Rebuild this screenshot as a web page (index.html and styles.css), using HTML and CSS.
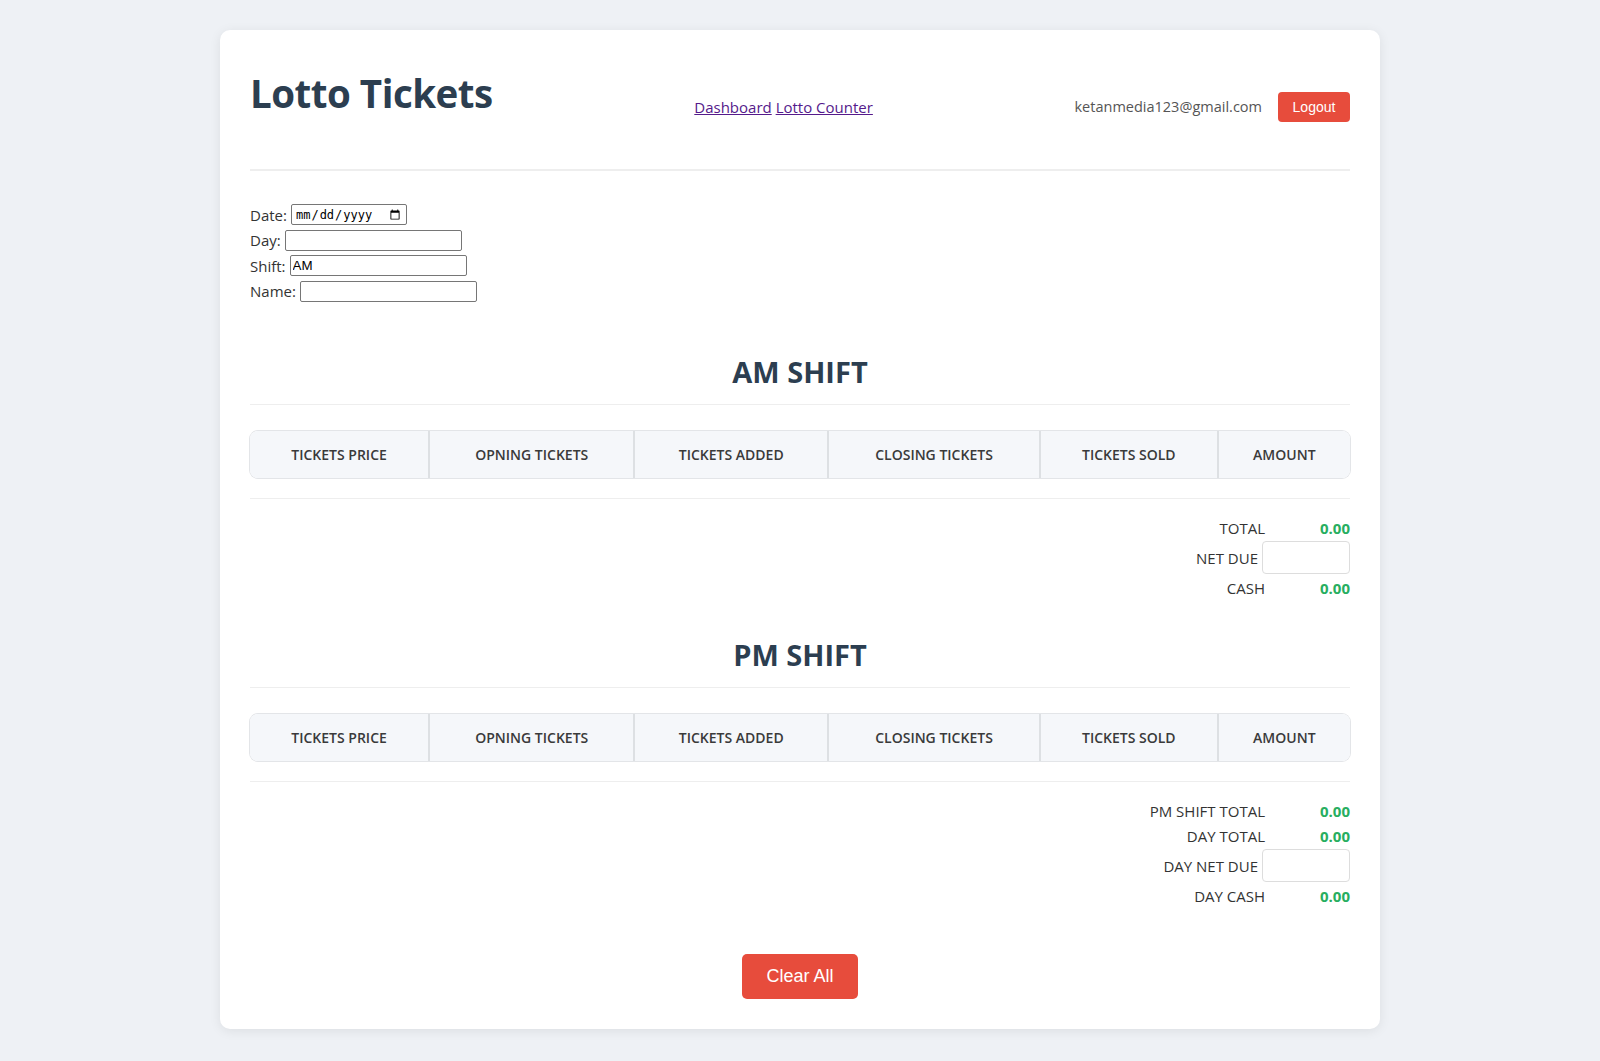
FILE: index.html
```html
<!DOCTYPE html>
<html lang="en">
<head>
<meta charset="utf-8">
<title>Lotto Tickets</title>
<link rel="stylesheet" href="styles.css">
</head>
<body>
<div class="card">
  <header class="header">
    <h1 class="title">Lotto Tickets</h1>
    <nav class="nav"><a href="#dash">Dashboard</a> <a href="#counter">Lotto Counter</a></nav>
    <div class="user">
      <span class="email">ketanmedia123@gmail.com</span>
      <button class="logout">Logout</button>
    </div>
  </header>

  <form class="info">
    <div class="row">Date: <input type="date" class="inp-date"></div>
    <div class="row">Day: <input type="text" class="inp"></div>
    <div class="row">Shift: <input type="text" class="inp" value="AM"></div>
    <div class="row">Name: <input type="text" class="inp"></div>
  </form>

  <section class="shift shift-am">
    <h2 class="shift-title">AM SHIFT</h2>
    <table class="grid">
      <thead>
        <tr><th>TICKETS PRICE</th><th>OPNING TICKETS</th><th>TICKETS ADDED</th><th>CLOSING TICKETS</th><th>TICKETS SOLD</th><th>AMOUNT</th></tr>
      </thead>
    </table>
    <div class="totals">
      <div class="trow"><span class="tlabel">TOTAL</span><span class="tval">0.00</span></div>
      <div class="trow trow-in"><span class="tlabel">NET DUE</span><input type="text" class="tinput"></div>
      <div class="trow"><span class="tlabel">CASH</span><span class="tval">0.00</span></div>
    </div>
  </section>

  <section class="shift shift-pm">
    <h2 class="shift-title">PM SHIFT</h2>
    <table class="grid">
      <thead>
        <tr><th>TICKETS PRICE</th><th>OPNING TICKETS</th><th>TICKETS ADDED</th><th>CLOSING TICKETS</th><th>TICKETS SOLD</th><th>AMOUNT</th></tr>
      </thead>
    </table>
    <div class="totals">
      <div class="trow"><span class="tlabel">PM SHIFT TOTAL</span><span class="tval">0.00</span></div>
      <div class="trow"><span class="tlabel">DAY TOTAL</span><span class="tval">0.00</span></div>
      <div class="trow trow-in"><span class="tlabel">DAY NET DUE</span><input type="text" class="tinput"></div>
      <div class="trow"><span class="tlabel">DAY CASH</span><span class="tval">0.00</span></div>
    </div>
  </section>

  <div class="actions"><button class="clear">Clear All</button></div>
</div>
</body>
</html>
```

FILE: styles.css
```css
* { box-sizing: border-box; }
html, body { margin: 0; padding: 0; }
body {
  background: #eef1f5;
  font-family: "Open Sans", "Noto Sans", sans-serif;
  color: #333;
  padding: 30px 0 31px;
}
.card {
  width: 1160px;
  margin: 0 auto;
  background: #fff;
  border-radius: 10px;
  box-shadow: 0 2px 12px rgba(0, 0, 0, 0.08);
  padding: 30px 30px 30px;
}
.header {
  display: flex;
  justify-content: space-between;
  align-items: center;
  height: 111px;
  border-bottom: 2px solid #eee;
  padding-bottom: 20px;
}
.title {
  margin: 0 0 24px;
  font-size: 38.5px;
  line-height: 48px;
  font-weight: 700;
  color: #2c3e50;
  letter-spacing: -0.5px;
}
.nav { margin-top: 4px; font-size: 15px; }
.nav a { color: #551a8b; }
.user { display: flex; align-items: center; margin-top: 4px; }
.email { font-size: 14.5px; color: #555; margin-right: 16px; }
.logout {
  background: #e74c3c;
  color: #fff;
  border: 0;
  border-radius: 4px;
  font-family: "Liberation Sans", Arial, sans-serif;
  font-size: 14px;
  height: 30px;
  width: 72px;
  padding: 0;
}
.info { margin-top: 31px; font-size: 15px; color: #333; }
.row { height: 25.5px; display: flex; align-items: center; gap: 4px; }
.inp, .inp-date {
  font-family: "Liberation Sans", Arial, sans-serif;
  font-size: 13.33px;
  height: 21px;
  border: 1px solid #767676;
  border-radius: 2px;
  padding: 1px 2px;
  width: 177px;
}
.inp-date { width: 116px; font-family: "DejaVu Sans Mono", monospace; font-size: 12px; padding: 1px 3px; }
.shift-title {
  text-align: center;
  margin: 0;
  font-size: 29px;
  line-height: 38px;
  font-weight: 700;
  color: #2c3e50;
  padding-bottom: 13px;
  border-bottom: 1px solid #eee;
}
.shift-am { margin-top: 49px; }
.shift-pm { margin-top: 36px; }
.grid {
  width: 100%;
  margin-top: 26px;
  border-collapse: separate;
  border-spacing: 0;
  border-radius: 8px;
  overflow: hidden;
  box-shadow: 0 0 0 1px #e3e5e8;
}
.grid th {
  background: #f5f7fa;
  border-left: 1px solid #dde0e3;
  border-right: 1px solid #dde0e3;
  font-size: 14px;
  font-weight: 600;
  color: #3a3a3a;
  height: 47px;
  padding: 0 15px;
}
.grid th:first-child { border-left: 0; }
.grid th:last-child { border-right: 0; }
.totals {
  border-top: 1px solid #eee;
  margin-top: 20px;
  padding-top: 16px;
  display: flex;
  flex-direction: column;
  align-items: flex-end;
  font-size: 15px;
}
.trow { display: flex; align-items: center; justify-content: flex-end; height: 25px; }
.trow-in { height: 35px; }
.tlabel { color: #333; }
.tval { width: 85px; text-align: right; color: #27ae60; font-weight: 700; }
.tinput {
  width: 88px;
  height: 33px;
  margin-left: 4px;
  border: 1px solid #ddd;
  border-radius: 4px;
}
.actions { display: flex; justify-content: center; margin-top: 46px; }
.clear {
  background: #e74c3c;
  color: #fff;
  border: 0;
  border-radius: 5px;
  font-family: "Liberation Sans", Arial, sans-serif;
  font-size: 18px;
  width: 116px;
  height: 45px;
}
```
